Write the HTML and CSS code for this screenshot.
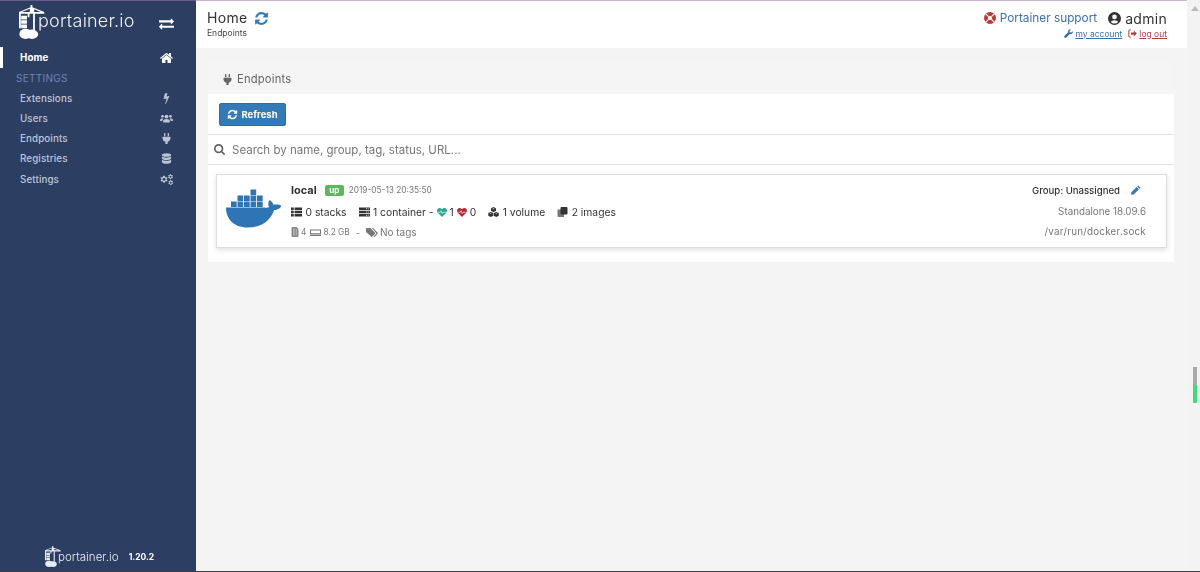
FILE: index.html
```html
<!DOCTYPE html>
<html lang="en">
<head>
<meta charset="utf-8">
<title>Portainer</title>
<link rel="stylesheet" href="styles.css">
</head>
<body>
<svg class="sprite" aria-hidden="true">
  <symbol id="i-refresh" viewBox="0 0 1792 1792"><path d="M1639 1056q0 5-1 7-64 268-268 434.5t-478 166.5q-146 0-282.5-55t-243.5-157l-129 129q-19 19-45 19t-45-19-19-45v-448q0-26 19-45t45-19h448q26 0 45 19t19 45-19 45l-137 137q71 66 161 102t187 36q134 0 250-65t186-179q11-17 53-117 8-23 30-23h192q13 0 22.5 9.5t9.5 22.5zm25-800v448q0 26-19 45t-45 19h-448q-26 0-45-19t-19-45 19-45l138-138q-148-137-349-137-134 0-250 65t-186 179q-11 17-53 117-8 23-30 23h-199q-13 0-22.5-9.5t-9.5-22.5v-7q65-268 270-434.5t480-166.5q146 0 284 55.5t245 156.5l130-129q19-19 45-19t45 19 19 45z"/></symbol>
  <symbol id="i-home" viewBox="128 128 1536 1408"><path d="M1472 992v480q0 26-19 45t-45 19h-384v-384h-256v384h-384q-26 0-45-19t-19-45v-480q0-1 .5-3t.5-3l575-474 575 474q1 2 1 6zm223-69l-62 74q-8 9-21 11h-3q-13 0-21-7l-692-577-692 577q-12 8-24 7-13-2-21-11l-62-74q-8-10-7-23.5t11-21.5l719-599q32-26 76-26t76 26l244 204v-195q0-14 9-23t23-9h192q14 0 23 9t9 23v408l219 182q10 8 11 21.5t-7 23.5z"/></symbol>
  <symbol id="i-exchange" viewBox="0 128 1792 1536"><path d="M1792 1184v192q0 13-9.5 22.5t-22.5 9.5h-1376v192q0 13-9.5 22.5t-22.5 9.5q-12 0-24-10l-319-320q-9-9-9-22 0-14 9-23l320-320q9-9 23-9 13 0 22.5 9.5t9.5 22.5v192h1376q13 0 22.5 9.5t9.5 22.5zm0-544q0 14-9 23l-320 320q-9 9-23 9-13 0-22.5-9.5t-9.5-22.5v-192h-1376q-13 0-22.5-9.5t-9.5-22.5v-192q0-13 9.5-22.5t22.5-9.5h1376v-192q0-14 9-23t23-9q12 0 24 10l319 319q9 9 9 23z"/></symbol>
  <symbol id="i-bolt" viewBox="400 100 1000 1700"><path d="M1333 566q18 20 7 44l-540 1157q-13 25-42 25-4 0-14-2-17-5-25.5-19t-4.5-30l197-808-406 101q-4 1-12 1-18 0-31-11-18-15-13-39l201-825q4-14 16-23t28-9h328q19 0 32 12.5t13 29.5q0 8-5 18l-171 463 396-98q8-2 12-2 19 0 34 15z"/></symbol>
  <symbol id="i-users" viewBox="0 0 24 18"><circle cx="12" cy="5.5" r="3.6"/><circle cx="4.6" cy="5" r="2.5"/><circle cx="19.4" cy="5" r="2.5"/><path d="M5.8 16.5v-2.4c0-2.6 2.2-4.2 6.2-4.2s6.200 1.600 6.200 4.200v2.400zM0 12.500c0-2.400 1.600-3.600 4-3.600 1 0 1.800.3 2.400.7-1.400 1-2.200 2.500-2.200 4.100H1c-.6 0-1-.4-1-1.200zM24 12.500c0-2.400-1.600-3.600-4-3.600-1 0-1.800.3-2.400.7 1.400 1 2.200 2.500 2.200 4.100H23c.6 0 1-.4 1-1.200z"/></symbol>
  <symbol id="i-plug" viewBox="0 0 16 20"><path d="M3.500 1a1.200 1.200 0 0 1 2.400 0v5h-2.400zM10.100 1a1.200 1.200 0 0 1 2.400 0v5h-2.400zM1.500 7h13a.8.8 0 0 1 .8.8v1.400c0 3.400-2.200 6-5.300 6.600V20H6v-4.200C2.900 15.200.7 12.600.7 9.200V7.800a.8.8 0 0 1 .8-.8z"/></symbol>
  <symbol id="i-db" viewBox="0 0 16 18"><ellipse cx="8" cy="3.300" rx="7.500" ry="3"/><path d="M.5 5.500C2 7.200 5 7.800 8 7.800s6-.6 7.500-2.300v3c0 1.700-3.400 3-7.500 3s-7.500-1.300-7.500-3zM.5 10.500c1.500 1.700 4.500 2.300 7.500 2.300s6-.6 7.500-2.300v4.200c0 1.700-3.400 3-7.500 3s-7.500-1.300-7.500-3z"/></symbol>
  <symbol id="i-cogs" viewBox="0 0 24 20"><path fill-rule="evenodd" d="M7.500 3l1.300.3.5 2 1.600.9 2-.6 1 1.800-1.500 1.400v1.800l1.500 1.400-1 1.800-2-.6-1.600.9-.5 2h-2.600l-.5-2-1.600-.9-2 .6-1-1.800 1.500-1.400V8.800L.6 7.400l1-1.800 2 .6 1.600-.9.500-2zM7.500 7a2.700 2.700 0 1 0 0 5.400 2.700 2.700 0 0 0 0-5.400z"/><path fill-rule="evenodd" d="M18.500 0l1.800.2.300 1.300 1 .6 1.300-.4.900 1.500-1 1v1.200l1 1-.9 1.500-1.300-.4-1 .6-.3 1.300h-1.800l-.3-1.300-1-.6-1.300.4-.9-1.500 1-1V4.200l-1-1 .9-1.500 1.300.4 1-.6zM19.400 3.200a1.800 1.800 0 1 0 0 3.600 1.800 1.800 0 0 0 0-3.600z"/><path fill-rule="evenodd" d="M19 11l1.800.2.300 1.300 1 .6 1.300-.4.600 1.500-1 1v1.200l1 1-.6 1.500-1.300-.4-1 .6-.3 1.300H19l-.3-1.300-1-.6-1.300.4-.9-1.500 1-1v-1.200l-1-1 .9-1.500 1.300.4 1-.6zM19.900 14.200a1.800 1.800 0 1 0 0 3.600 1.800 1.800 0 0 0 0-3.600z"/></symbol>
  <symbol id="i-search" viewBox="64 128 1664 1664"><path d="M1216 832q0-185-131.500-316.500T768 384 451.500 515.500 320 832t131.500 316.500T768 1280t316.500-131.500T1216 832zm512 832q0 52-38 90t-90 38q-54 0-90-38l-343-342q-179 124-399 124-143 0-273.500-55.500t-225-150-150-225T64 832t55.500-273.500 150-225 225-150T768 128t273.500 55.500 225 150 150 225T1472 832q0 220-124 399l343 343q37 37 37 90z"/></symbol>
  <symbol id="i-ring" viewBox="0 0 20 20"><path fill-rule="evenodd" d="M10 0a10 10 0 1 1 0 20 10 10 0 0 1 0-20zM10 6.500a3.500 3.500 0 1 0 0 7 3.500 3.500 0 0 0 0-7z"/><path class="ring-cut" d="M3 3l4.600 4.600M17 3l-4.600 4.600M3 17l4.600-4.600M17 17l-4.600-4.600"/></symbol>
  <symbol id="i-user" viewBox="0 0 20 20"><path fill-rule="evenodd" d="M10 0a10 10 0 1 1 0 20 10 10 0 0 1 0-20zM10 4a3.600 3.600 0 1 0 0 7.200A3.600 3.600 0 0 0 10 4zM10 12.600c-2.600 0-4.700 1.100-5.600 2.700A7.600 7.600 0 0 0 10 17.700a7.600 7.600 0 0 0 5.600-2.400c-.9-1.600-3-2.700-5.600-2.700z"/></symbol>
  <symbol id="i-wrench" viewBox="0 0 20 20"><path d="M19.500 4.800c.6 2.300-.1 4.500-1.700 5.700-1.400 1-3.100 1.200-4.700.7L5.300 19c-1.200 1.200-3 1.200-4.100.1-1.200-1.200-1.100-3 .1-4.200l7.800-7.700c-.5-1.700-.2-3.400.9-4.800C11.300.8 13.500.100 15.700.6l-3.500 3.500.6 3.200 3.200.7z"/></symbol>
  <symbol id="i-signout" viewBox="0 0 20 18"><path d="M7 2H4.500C3.600 2 3 2.700 3 3.500v11c0 .8.600 1.500 1.500 1.500H7v2H4C2 18 .7 16.500.7 14.700V3.300C.7 1.500 2 0 4 0h3zM13 2.500l6.800 6.500-6.800 6.500V11.500H6.500v-5H13z"/></symbol>
  <symbol id="i-pencil" viewBox="0 0 20 20"><path d="M14.500.8l4.700 4.700-2 2-4.700-4.700zM11.300 4l4.700 4.700L5.500 19.200.3 19.700l.5-5.200z"/></symbol>
  <symbol id="i-list" viewBox="0 0 20 16"><path d="M0 0h5v4.300H0zM6.500 0H20v4.300H6.500zM0 5.800h5v4.400H0zM6.500 5.800H20v4.400H6.500zM0 11.700h5V16H0zM6.500 11.700H20V16H6.500z"/></symbol>
  <symbol id="i-server" viewBox="0 0 20 16"><path fill-rule="evenodd" d="M0 0h20v4.300H0zM13 1.400v1.500h1.500V1.400zM16 1.400v1.500h1.500V1.400zM0 5.800h20v4.400H0zM13 7.200v1.500h1.500V7.200zM16 7.200v1.500h1.500V7.200zM0 11.700h20V16H0zM13 13.100v1.500h1.500v-1.500zM16 13.100v1.500h1.500v-1.500z"/></symbol>
  <symbol id="i-heart" viewBox="0 0 20 18"><path fill-rule="evenodd" d="M10 17.800L2 9.800C-.6 7-.5 3.300 1.800 1.400 4-.5 7.600-.3 10 2.600c2.400-2.900 6-3.100 8.200-1.200 2.300 1.900 2.400 5.600-.2 8.400z"/><path class="pulse" d="M2.500 8.500h4l1.500-3 2.500 5.500 1.500-2.500h5.500"/></symbol>
  <symbol id="i-cubes" viewBox="0 0 20 18"><path fill-rule="evenodd" d="M10 0l4.500 2v5L10 9 5.500 7V2zM10 2.200L8 3l2 .8 2-.8zM5 9l4.500 2v5L5 18 .5 16v-5zM5 11.200L3 12l2 .8 2-.8zM15 9l4.500 2v5L15 18l-4.500-2v-5zM15 11.200l-2 .8 2 .8 2-.8z"/></symbol>
  <symbol id="i-clone" viewBox="0 0 20 20"><path class="back" d="M0 5h13v15H2a2 2 0 0 1-2-2z"/><path d="M6 2a2 2 0 0 1 2-2h10a2 2 0 0 1 2 2v11a2 2 0 0 1-2 2H8a2 2 0 0 1-2-2z"/></symbol>
  <symbol id="i-mem" viewBox="0 0 14 20"><path d="M2 0h8l4 4v14a2 2 0 0 1-2 2H2a2 2 0 0 1-2-2V2a2 2 0 0 1 2-2z"/><path class="mem-line" d="M3 3h1.500v14H3zM6 3h1.500v14H6zM9 4h1.500v13H9z"/></symbol>
  <symbol id="i-hdd" viewBox="0 0 22 14"><path fill-rule="evenodd" d="M0 1h22v9.500H0zM2 3v5.500h18V3zM0 11.500h22V14H0z"/></symbol>
  <symbol id="i-tags" viewBox="0 0 24 18"><path d="M0 1.500A1.500 1.500 0 0 1 1.500 0h7.200L18 9.300a1.700 1.700 0 0 1 0 2.400l-6.300 6.300-11.700-9.800z"/><path d="M11.500 0H14l9.300 9.300a1.700 1.700 0 0 1 0 2.400L17 18h-2.500l6.300-7.500z"/></symbol>
  <symbol id="i-crane" viewBox="0 0 36 47"><path d="M0 9.500L16 3V0h2.500v3L35 9.500v2.500H22v23h-2.500V12h-5v5h-2.500v-5H2.500v20H0zM4 9.500h11V5zM21 9.500h9L21 5.800z"/><path d="M3 15h8v5H3zM3 21h8v5H3zM3 27h8v5H3z"/><ellipse cx="9" cy="40" rx="8.500" ry="7"/><ellipse cx="18" cy="40.500" rx="8.500" ry="6.500"/></symbol>
  <symbol id="i-whale" viewBox="0 0 56 42"><path d="M0 21.500h38.500c1.500.4 3.300.4 4.700-.4-1.300-2-1.200-4.800.3-7.100 2.300 1.300 3.500 3.200 3.900 4.800 2.500-.7 5.800-.5 8.100.8-1.500 3.500-4.800 4.700-7.500 4.600C44.500 34.500 36 41.500 21.500 41.500 7.500 41.500 0 32.500 0 21.500z"/><path d="M5 15.500h5.700V21H5zM11.500 15.500h5.700V21h-5.700zM18 15.500h5.700V21H18zM24.500 15.500h5.700V21h-5.700zM31 15.500h5.700V21H31zM11.500 9.500h5.700V15h-5.700zM18 9.500h5.700V15H18zM24.500 9.500h5.700V15h-5.700zM31 9.500h5.700V15H31zM24.500 3.500h5.700V9h-5.700z"/></symbol>
</svg>

<div class="app">
  <aside class="sidebar">
    <div class="brand">
      <svg class="brand-mark"><use href="#i-crane"/></svg>
      <span class="brand-name">portainer.io</span>
      <svg class="brand-toggle"><use href="#i-exchange"/></svg>
    </div>
    <nav class="nav">
      <a class="nav-item active"><span>Home</span><svg class="nav-icon"><use href="#i-home"/></svg></a>
      <div class="nav-title">SETTINGS</div>
      <a class="nav-item"><span>Extensions</span><svg class="nav-icon"><use href="#i-bolt"/></svg></a>
      <a class="nav-item"><span>Users</span><svg class="nav-icon"><use href="#i-users"/></svg></a>
      <a class="nav-item"><span>Endpoints</span><svg class="nav-icon"><use href="#i-plug"/></svg></a>
      <a class="nav-item"><span>Registries</span><svg class="nav-icon"><use href="#i-db"/></svg></a>
      <a class="nav-item"><span>Settings</span><svg class="nav-icon"><use href="#i-cogs"/></svg></a>
    </nav>
    <div class="side-footer">
      <svg class="foot-mark"><use href="#i-crane"/></svg>
      <span class="foot-name">portainer.io</span>
      <span class="foot-version">1.20.2</span>
    </div>
  </aside>

  <main class="main">
    <header class="topbar">
      <div class="crumbs">
        <div class="page-title">Home <svg class="title-refresh"><use href="#i-refresh"/></svg></div>
        <div class="page-sub">Endpoints</div>
      </div>
      <div class="account">
        <div class="account-top">
          <svg class="ring"><use href="#i-ring"/></svg>
          <a class="support">Portainer support</a>
          <svg class="user-icon"><use href="#i-user"/></svg>
          <span class="user-name">admin</span>
        </div>
        <div class="account-links">
          <svg class="link-icon blue"><use href="#i-wrench"/></svg><a class="link blue">my account</a>
          <svg class="link-icon red"><use href="#i-signout"/></svg><a class="link red">log out</a>
        </div>
      </div>
    </header>

    <section class="widget">
      <div class="widget-head"><svg class="head-plug"><use href="#i-plug"/></svg><span>Endpoints</span></div>
      <div class="actions"><button class="btn"><svg class="btn-icon"><use href="#i-refresh"/></svg>Refresh</button></div>
      <div class="search"><svg class="search-icon"><use href="#i-search"/></svg><span>Search by name, group, tag, status, URL...</span></div>
      <div class="list">
        <article class="card">
          <svg class="whale"><use href="#i-whale"/></svg>
          <div class="card-main">
            <div class="line-name"><strong>local</strong><span class="badge">up</span><span class="date">2019-05-13 20:35:50</span></div>
            <div class="line-stats">
              <div class="stat"><svg class="ic"><use href="#i-list"/></svg><span>0 stacks</span></div>
              <div class="stat"><svg class="ic"><use href="#i-server"/></svg><span>1 container -</span><svg class="ic-h green"><use href="#i-heart"/></svg><span>1</span><svg class="ic-h crimson"><use href="#i-heart"/></svg><span>0</span></div>
              <div class="stat"><svg class="ic"><use href="#i-cubes"/></svg><span>1 volume</span></div>
              <div class="stat"><svg class="ic"><use href="#i-clone"/></svg><span>2 images</span></div>
            </div>
            <div class="line-meta">
              <svg class="ic-mem"><use href="#i-mem"/></svg><span class="small">4</span>
              <svg class="ic-hdd"><use href="#i-hdd"/></svg><span class="small">8.2 GB</span>
              <span class="dash">-</span>
              <svg class="ic-tags"><use href="#i-tags"/></svg><span class="tags">No tags</span>
            </div>
          </div>
          <div class="card-side">
            <div class="group"><span>Group: Unassigned</span><svg class="pencil"><use href="#i-pencil"/></svg></div>
            <div class="side-text">Standalone 18.09.6</div>
            <div class="side-text path">/var/run/docker.sock</div>
          </div>
        </article>
      </div>
    </section>
  </main>

  <div class="scrollbar" aria-hidden="true">
    <span class="scroll-arrow"></span>
    <span class="scroll-thumb"></span>
  </div>
</div>
</body>
</html>
```

FILE: styles.css
```css
* { box-sizing: border-box; }
html, body { margin: 0; height: 572px; overflow: hidden; }
body { font-family: Inter, "Open Sans", sans-serif; background: #f4f4f4; color: #333; }
svg { fill: currentColor; }
.sprite { width: 0; height: 0; position: absolute; }
.app { display: flex; height: 572px; border-bottom: 1px solid #3a3f4a; filter: blur(.35px); }

.sidebar { width: 196px; flex: none; background: #2d3e63; border-top: 1px solid #6a5a8a; display: flex; flex-direction: column; color: #fff; }
.brand { height: 46.300px; display: flex; align-items: flex-start; position: relative; }
.brand-mark { width: 26px; height: 34px; margin: 4px 0 0 19px; flex: none; }
.brand-name { font-size: 18px; font-weight: 300; margin: 7px 0 0 -7px; letter-spacing: .2px; color: #f0f2f6; line-height: 26px; }
.brand-toggle { width: 15px; height: 13px; position: absolute; left: 159px; top: 16px; }
.nav { display: flex; flex-direction: column; }
.nav-item { height: 20.3px; display: flex; align-items: center; justify-content: space-between; padding: 0 23px 0 20px; font-size: 9.800px; font-weight: 500; color: #bcc5d8; letter-spacing: .1px; }
.nav-item.active { color: #fff; font-weight: 700; box-shadow: inset 3px 0 0 #fff; }
.nav-title { height: 20.3px; line-height: 20px; padding-left: 16px; font-size: 10px; color: #6f84b4; letter-spacing: .3px; }
.nav-icon { width: 13px; height: 11px; }
.side-footer { margin-top: auto; height: 25px; margin-bottom: 2px; display: flex; align-items: center; color: #e8ebf2; }
.foot-mark { width: 16px; height: 21px; margin-left: 45px; flex: none; }
.foot-name { font-size: 11.600px; font-weight: 300; margin-left: -3px; }
.foot-version { font-size: 8.500px; font-weight: 700; margin-left: 10px; color: #fff; }

.main { flex: none; width: 991px; display: flex; flex-direction: column; }
.topbar { height: 48px; background: #fff; border-top: 1px solid #c9b3cf; display: flex; justify-content: space-between; padding: 0 20px 0 11px; }
.page-title { font-size: 14px; line-height: 16px; margin-top: 9px; color: #333; display: flex; align-items: center; gap: 7px; letter-spacing: .3px; }
.title-refresh { width: 15px; height: 15px; color: #337ab7; }
.page-sub { font-size: 8.500px; line-height: 11px; margin-top: 2px; color: #444; }
.account { display: flex; flex-direction: column; align-items: flex-end; }
.account-top { display: flex; align-items: center; height: 16px; margin-top: 9px; }
.ring { width: 12px; height: 12px; color: #b93a3a; margin-right: 4px; }
.ring-cut { stroke: #fff; stroke-width: 2; fill: none; }
.support { font-size: 11.800px; color: #3f6fb0; }
.user-icon { width: 13px; height: 13px; margin: 0 4px 0 11px; color: #333; }
.user-name { font-size: 14px; color: #333; letter-spacing: .3px; }
.account-links { display: flex; align-items: center; height: 11px; margin-top: 2px; font-size: 8.500px; }
.link { text-decoration: underline; margin-left: 2px; }
.blue { color: #3f6fb0; }
.red { color: #a94442; }
.link-icon { width: 9px; height: 9px; }
.link-icon.red { margin-left: 6px; }

.widget { margin: 12px 13px 0 12px; display: flex; flex-direction: column; background: #fff; }
.widget-head { height: 34px; background: #f5f5f5; display: flex; align-items: center; padding: 4px 0 0 15px; gap: 5px; font-size: 11.200px; color: #666; letter-spacing: .2px; }
.head-plug { width: 9px; height: 11px; }
.actions { height: 41px; padding: 9px 0 0 11px; border-bottom: 1px solid #e4e4e4; }
.btn { height: 23px; width: 67px; padding: 0; border: 1px solid #2e6da4; border-radius: 2px; background: #337ab7; color: #fff; font: 700 9.500px Inter, sans-serif; display: flex; align-items: center; justify-content: center; gap: 3px; }
.btn-icon { width: 11px; height: 11px; }
.search { height: 30px; display: flex; align-items: center; padding-left: 6px; gap: 7px; font-size: 11.500px; color: #777; border-bottom: 1px solid #e4e4e4; }
.search-icon { width: 11px; height: 11px; color: #666; }
.list { padding: 9px 7px 14px 8px; }
.card { height: 74px; border: 1px solid #ddd; box-shadow: 0 2px 5px rgba(0,0,0,.12); display: flex; padding: 0 20px 0 9px; }
.whale { width: 56px; height: 42px; margin-top: 11px; color: #2f75b5; flex: none; }
.card-main { margin-left: 9px; flex: 1; padding-top: 8px; }
.line-name { display: flex; align-items: center; height: 14px; }
.line-name strong { font-size: 11px; font-weight: 700; color: #333; }
.badge { margin-left: 8px; background: #5cb85c; color: #fff; font-size: 8px; font-weight: 700; width: 19px; height: 11px; line-height: 11px; text-align: center; border-radius: 2px; }
.date { margin-left: 5px; font-size: 8.300px; color: #777; }
.line-stats { display: flex; align-items: center; height: 20px; margin-top: 5px; font-size: 10.300px; color: #333; gap: 12px; }
.stat { display: flex; align-items: center; gap: 3px; white-space: nowrap; }
.ic { width: 11px; height: 10px; margin-right: .5px; }
.ic-h { width: 10px; height: 9px; }
.green { color: #2ba58f; }
.crimson { color: #b02a37; }
.pulse { fill: none; stroke: #fff; stroke-width: 1.300; }
.back { fill: #777; }
.mem-line { fill: #bbb; }
.line-meta { display: flex; align-items: center; height: 20px; font-size: 8.300px; color: #777; }
.ic-mem { width: 8px; height: 10px; color: #888; margin-right: 2px; }
.ic-hdd { width: 11px; height: 7px; margin: 0 2px 0 4px; }
.dash { margin: 0 6px; font-size: 9px; }
.ic-tags { width: 12px; height: 9px; margin-right: 2px; }
.tags { font-size: 10px; }
.card-side { width: 150px; display: flex; flex-direction: column; align-items: flex-end; padding-top: 8px; }
.group { height: 14px; font-size: 9.600px; color: #333; font-weight: 500; display: flex; align-items: center; margin-right: 5px; }
.pencil { width: 10px; height: 10px; color: #3a78b8; margin-left: 11px; }
.side-text { font-size: 9.800px; color: #777; height: 20px; line-height: 20px; }
.group + .side-text { margin-top: 5px; }
.path { letter-spacing: .25px; }

.scrollbar { flex: 1; background: #f3f3f3; position: relative; }
.scroll-arrow { position: absolute; left: 4px; top: 6px; border: 4px solid transparent; border-top: 0; border-bottom: 5px solid #bbb; }
.scroll-thumb { position: absolute; left: 6px; top: 367px; width: 4px; height: 36px; background: linear-gradient(#a8a8a8 0 50%, #3ddc74 50% 100%); }
```
